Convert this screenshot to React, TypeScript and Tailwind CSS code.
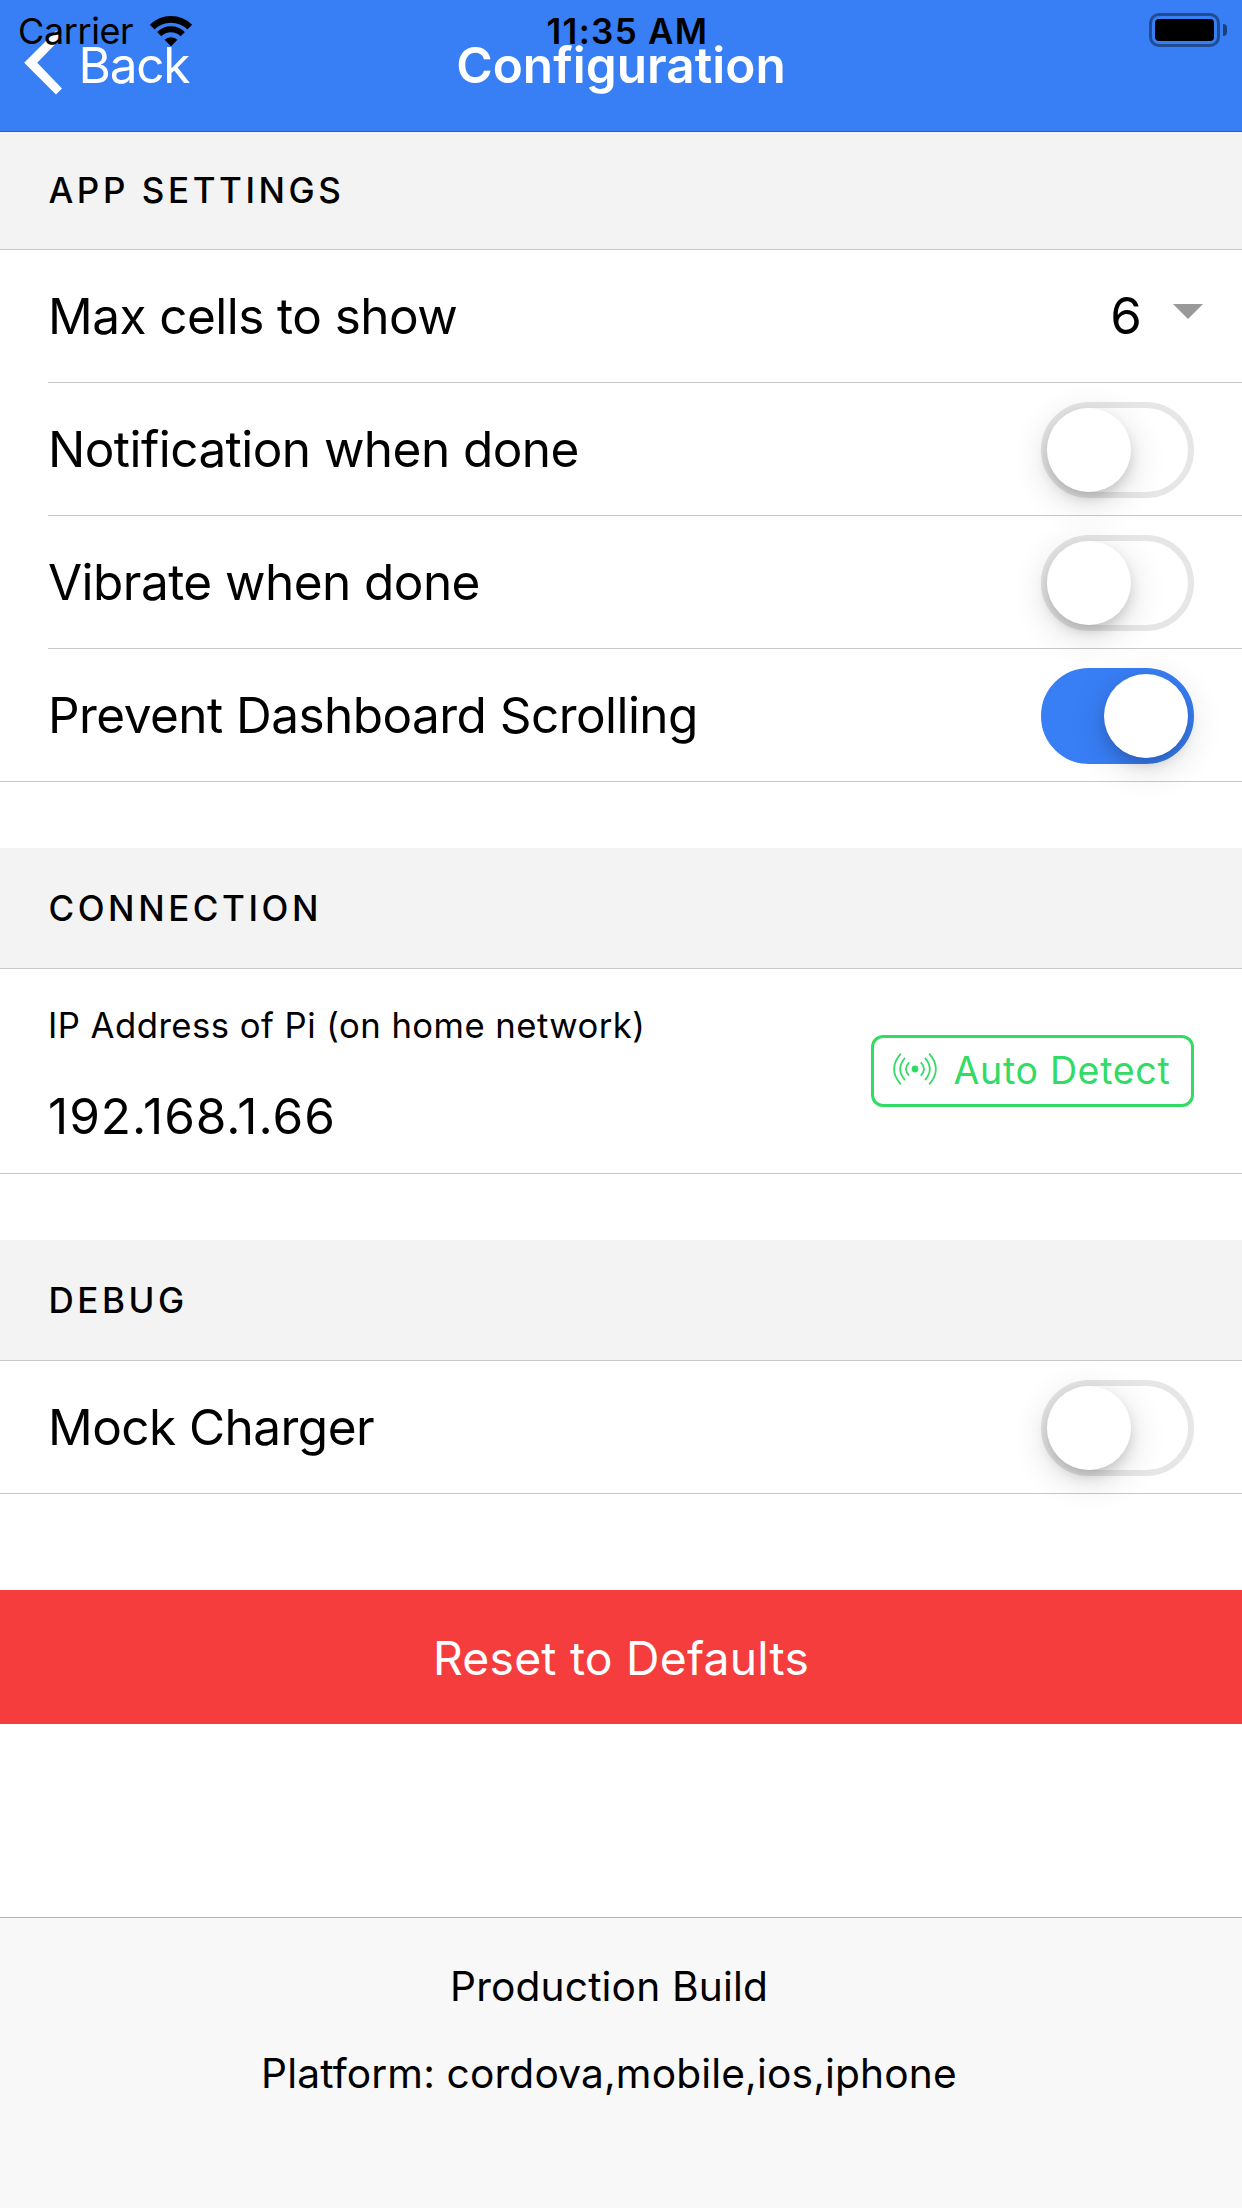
import type { ReactNode } from 'react';

function StatusBar() {
  return (
    <div className="absolute inset-x-0 top-0 z-10 h-[62px] text-black">
      <div className="flex h-full items-center justify-between pl-[18px] pr-[15px]">
        <div className="flex items-center">
          <span className="w-[118px] whitespace-nowrap text-[36px] leading-[62px] tracking-[-0.4px]">Carrier</span>
          <svg className="ml-[12px] -mt-px" width="46" height="32" viewBox="148 14 46 32" fill="none" stroke="#000">
            <path d="M152.2 26.2A26.6 26.6 0 0 1 189.8 26.2" strokeWidth="6.6" />
            <path d="M159.2 33.2A16.7 16.7 0 0 1 182.8 33.2" strokeWidth="6" />
            <path d="M171 45.3L164.6 38.8A9.1 9.1 0 0 1 177.4 38.8Z" fill="#000" stroke="none" />
          </svg>
        </div>
        <div className="-mt-[2px] flex items-center gap-[3px]">
          <div className="h-[34px] w-[71px] rounded-[10px] border-[3px] border-black/40 p-[3px]">
            <div className="h-full rounded-[4px] bg-black" />
          </div>
          <div className="h-[12px] w-[4px] rounded-r-full bg-black/50" />
        </div>
      </div>
      <span className="absolute left-[546.5px] top-0 whitespace-nowrap text-[35px] font-semibold leading-[62px] tracking-[1.28px]">
        11:35 AM
      </span>
    </div>
  );
}

function NavBar() {
  return (
    <header className="grid h-[132px] grid-cols-[1fr_auto_1fr] items-center border-b border-[#2c62b8] bg-[#387ef5] text-[49.5px] leading-[60px] text-white">
      <button className="flex items-center pl-[24px]">
        <svg className="-mt-[6px]" width="39" height="64" viewBox="24 31 39 64" fill="#fff">
          <path d="M56 31L62 37.2L37.2 62.7L62 88.4L56 94.4L24.2 62.7Z" />
        </svg>
        <span className="-mt-[2px] ml-[15.5px] tracking-[-1.2px]">Back</span>
      </button>
      <h1 className="-mt-[2px] font-semibold tracking-[0.04px]">Configuration</h1>
      <span />
    </header>
  );
}

function SectionHeader({ first, children }: { first?: boolean; children: ReactNode }) {
  return (
    <h2
      className={`flex items-center border-b border-[#c8c7cc] bg-[#f3f3f3] pl-[48.5px] text-[35px] font-medium leading-none tracking-[3.56px] ${
        first ? 'h-[118px]' : 'h-[121px]'
      }`}
    >
      {children}
    </h2>
  );
}

function Row({ label, last, children }: { label: string; last?: boolean; children: ReactNode }) {
  return (
    <div className={last ? 'border-b border-[#c8c7cc]' : 'ml-[48px] border-b border-[#c8c7cc]'}>
      <div className={`flex h-[132px] items-center justify-between ${last ? 'pl-[48px]' : ''}`}>
        <span className="whitespace-nowrap text-[49.5px] leading-[60px] tracking-[-0.55px]">{label}</span>
        {children}
      </div>
    </div>
  );
}

function Toggle({ on }: { on?: boolean }) {
  return (
    <div
      className={`mr-[48px] mt-[2px] flex h-[96px] w-[153px] items-center rounded-full border-[6px] ${
        on ? 'justify-end border-[#387ef5] bg-[#387ef5]' : 'border-[#e6e6e6] bg-white'
      }`}
    >
      <div className="size-[84px] rounded-full bg-white shadow-[0_9px_36px_rgba(0,0,0,0.16),0_7px_14px_-2px_rgba(0,0,0,0.16)]" />
    </div>
  );
}

function RadioWaves() {
  return (
    <svg width="44" height="32" viewBox="0 0 44 32" fill="none" stroke="#32db64" strokeWidth="1.7">
      <circle cx="22" cy="16" r="3.4" fill="#32db64" stroke="none" />
      <path d="M16.2 9.4Q9.8 16 16.2 22.6M27.8 9.4Q34.2 16 27.8 22.6" />
      <path d="M12 4.9Q2.4 16 12 27.1M32 4.9Q41.6 16 32 27.1" />
      <path d="M7.8 .6Q-5.6 16 7.8 31.4M36.2 .6Q49.6 16 36.2 31.4" />
    </svg>
  );
}

export default function App() {
  return (
    <div className="relative flex h-[2208px] w-[1242px] flex-col overflow-hidden bg-white font-['Inter',sans-serif] text-black">
      <StatusBar />
      <NavBar />

      <main className="flex-1">
        <SectionHeader first>APP SETTINGS</SectionHeader>
        <Row label="Max cells to show">
          <div className="flex items-center pr-[39px]">
            <span className="text-[51px] leading-[60px]">6</span>
            <svg className="-mt-[9px] ml-[31px]" width="30" height="15" viewBox="0 0 30 15" fill="#999">
              <path d="M0 0H30L15 15Z" />
            </svg>
          </div>
        </Row>
        <Row label="Notification when done">
          <Toggle />
        </Row>
        <Row label="Vibrate when done">
          <Toggle />
        </Row>
        <Row label="Prevent Dashboard Scrolling" last>
          <Toggle on />
        </Row>

        <section className="mt-[66px]">
          <SectionHeader>CONNECTION</SectionHeader>
          <div className="flex h-[205px] items-center justify-between border-b border-[#c8c7cc] px-[48px]">
            <div className="-mt-[2px] flex flex-col gap-[31px]">
              <span className="text-[34.7px] leading-[60px] tracking-[0.46px]">IP Address of Pi (on home network)</span>
              <span className="text-[49.5px] leading-[60px] tracking-[1px]">192.168.1.66</span>
            </div>
            <button className="flex h-[72px] w-[323px] items-center rounded-[12px] border-[3px] border-[#32db64] pl-[19px] text-[37.5px] leading-none tracking-[0.68px] text-[#32db64]">
              <span className="-mt-[4px]">
                <RadioWaves />
              </span>
              <span className="ml-[16.5px] whitespace-nowrap">Auto Detect</span>
            </button>
          </div>
        </section>

        <section className="mt-[66px]">
          <SectionHeader>DEBUG</SectionHeader>
          <Row label="Mock Charger" last>
            <Toggle />
          </Row>
        </section>

        <button className="mt-[96px] flex h-[134px] w-full items-center justify-center bg-[#f53d3d] pt-[2px] text-[46.3px] leading-[60px] tracking-[0.22px] text-white">
          Reset to Defaults
        </button>
      </main>

      <footer className="h-[291px] border-t border-[#b2b2b2] bg-[#f8f8f8] pr-[24px] pt-[25px] text-center text-[40.7px] leading-[87px] tracking-[0.15px]">
        <p>Production Build</p>
        <p>Platform: cordova,mobile,ios,iphone</p>
      </footer>
    </div>
  );
}
